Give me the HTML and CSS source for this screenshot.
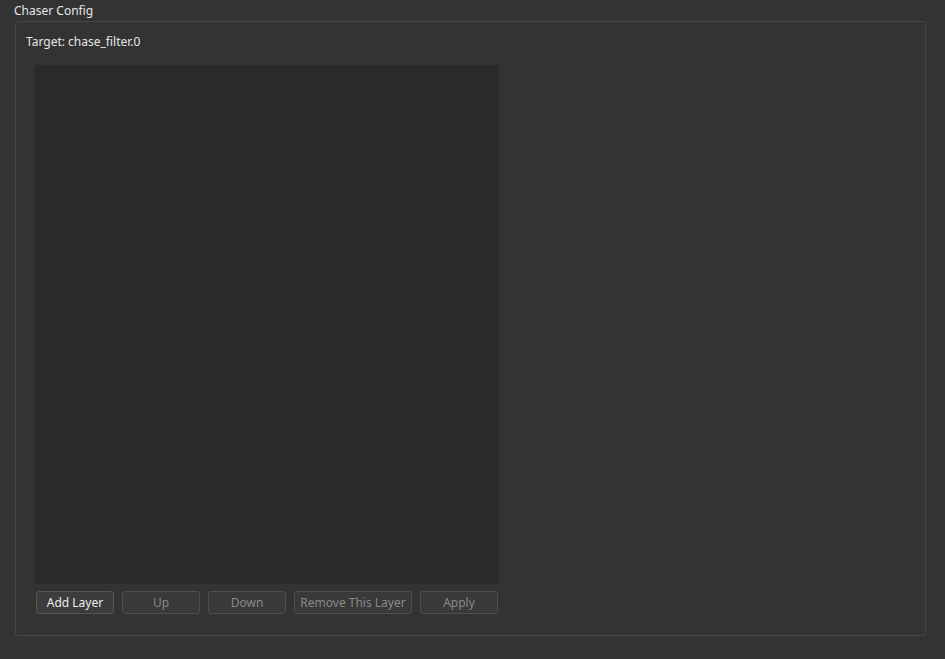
FILE: index.html
```html
<!DOCTYPE html>
<html lang="en">
<head>
  <meta charset="UTF-8">
  <title>Chaser Config</title>
  <link rel="stylesheet" href="styles.css">
</head>
<body>
  <div class="title">Chaser Config</div>
  <div class="group">
    <div class="target">Target: chase_filter.0</div>
    <div class="panel">
      <div class="layers"></div>
      <div class="buttons">
        <button class="btn">Add Layer</button>
        <button class="btn" disabled>Up</button>
        <button class="btn" disabled>Down</button>
        <button class="btn wide" disabled>Remove This Layer</button>
        <button class="btn" disabled>Apply</button>
      </div>
    </div>
  </div>
</body>
</html>
```

FILE: styles.css
```css
body { margin: 0; background: #333333; font-family: "Noto Sans", sans-serif; font-size: 12px; color: #e6e6e6; width: 945px; height: 659px; overflow: hidden; }
.title { height: 21px; line-height: 22px; padding-left: 14px; }
.group { margin: 0 19px 0 15px; height: 615px; box-sizing: border-box; border: 1px solid #464646; border-radius: 3px; padding: 10px 0 0 10px; }
.target { height: 20px; line-height: 20px; }
.panel { margin: 13px 0 0 9px; width: 464px; }
.layers { height: 519px; background: #2a2a2a; }
.buttons { display: flex; gap: 8px; margin: 7px 0 0 1px; }
.btn { width: 78px; height: 23px; padding: 0; background: #3c3c3c; border: 1px solid #555555; border-radius: 3px; font-family: "Noto Sans", sans-serif; font-size: 12px; color: #ececec; }
.btn.wide { width: 118px; }
.btn:disabled { color: #8a8a8a; background: #393939; border-color: #4e4e4e; }
```
